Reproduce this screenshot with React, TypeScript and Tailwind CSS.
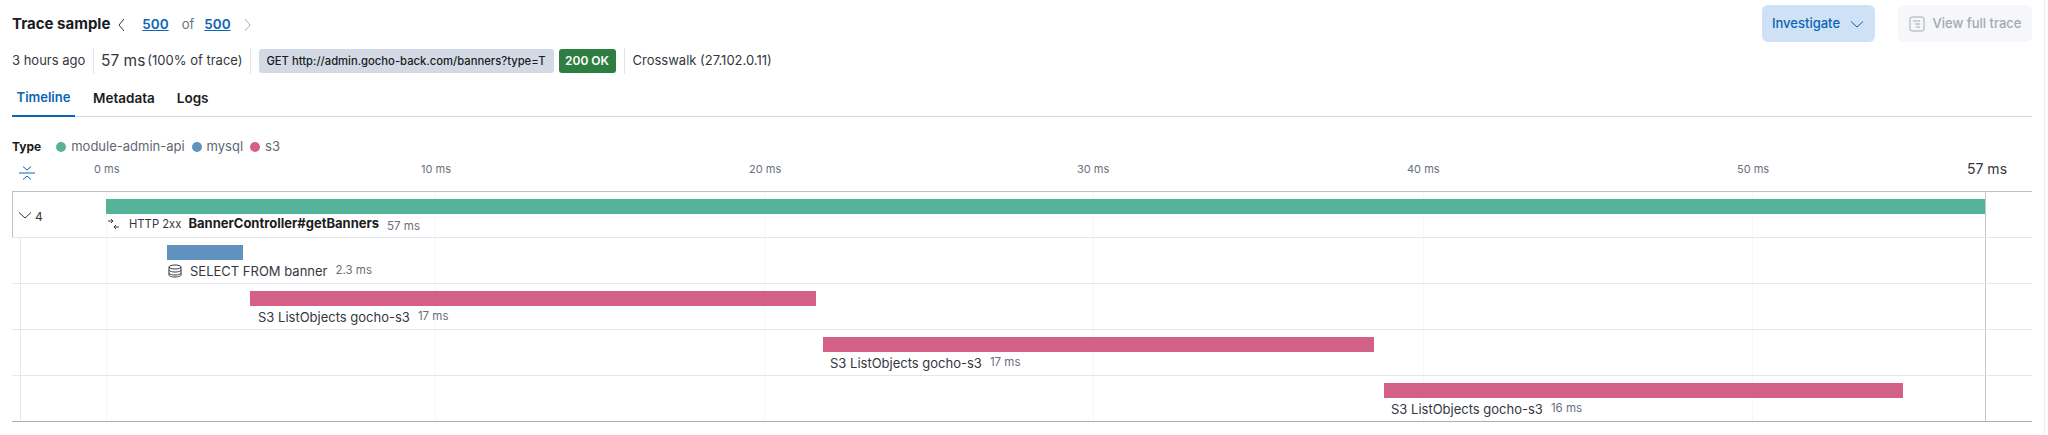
import React from "react";

const Chevron = ({ dir, className }: { dir: "left" | "right" | "down"; className?: string }) => {
  const d = dir === "left" ? "M10 2 L5 8 L10 14" : dir === "right" ? "M6 2 L11 8 L6 14" : "M2 5.5 L8 11 L14 5.5";
  return (
    <svg width="16" height="16" viewBox="0 0 16 16" fill="none" stroke="currentColor" strokeWidth="1" className={className}>
      <path d={d} />
    </svg>
  );
};

const Divider = () => <div className="h-[26px] w-px bg-[#dfe4ec]" />;

const Legend = ({ color, label }: { color: string; label: string }) => (
  <div className="flex items-center gap-[5px]">
    <span className="h-[10px] w-[10px] rounded-full" style={{ backgroundColor: color }} />
    <span className="text-[13px] text-[#5f6773]">{label}</span>
  </div>
);

const ticks = [
  { label: "0 ms", w: "w-[327px]" },
  { label: "10 ms", w: "w-[328px]" },
  { label: "20 ms", w: "w-[328px]" },
  { label: "30 ms", w: "w-[330px]" },
  { label: "40 ms", w: "w-[330px]" },
  { label: "50 ms", w: "w-[230px]" },
];
const grid = ["left-[94px]", "left-[423px]", "left-[752px]", "left-[1081px]", "left-[1411px]", "left-[1740px]"];

const Duration = ({ children }: { children: React.ReactNode }) => (
  <span className="text-[11.5px] text-[#69707d]">{children}</span>
);

const SpanRow = ({
  barClass,
  labelClass,
  label,
  dur,
  icon,
}: {
  barClass: string;
  labelClass: string;
  label: string;
  dur: string;
  icon?: React.ReactNode;
}) => (
  <div className="relative h-[46px] border-t border-[#e3e7ee] pt-[7px]">
    <div className={`h-[15px] ${barClass}`} />
    <div className={`mt-[2px] flex h-[18px] items-center gap-2 ${labelClass}`}>
      {icon}
      <span className="text-[13px] leading-[18px] text-[#343741]">{label}</span>
      <Duration>{dur}</Duration>
    </div>
  </div>
);

export default function App() {
  return (
    <div className="h-[435px] w-[2045px] overflow-hidden border-r border-[#eceff4] bg-white pl-3 pr-3 font-['Inter',sans-serif] text-[#1a1c21]">
      <div className="flex h-[43px] items-center pt-[6px]">
        <span className="text-[15px] font-bold">Trace sample</span>
        <Chevron dir="left" className="ml-[4px] text-[#343741]" />
        <span className="ml-[12px] text-[13.5px] font-semibold text-[#0b64b4] underline">500</span>
        <span className="ml-[13px] text-[13px] text-[#69707d]">of</span>
        <span className="ml-[10px] text-[13.5px] font-semibold text-[#0b64b4] underline">500</span>
        <Chevron dir="right" className="ml-[8px] text-[#a8afbb]" />
        <div className="ml-auto flex -translate-y-[1px] items-center gap-[23px]">
          <div className="flex h-[37px] w-[113px] items-center justify-center gap-[9px] rounded-[6px] bg-[#cfe2f5] text-[13px] font-medium text-[#0b64b4]">
            Investigate
            <Chevron dir="down" className="text-[#0b64b4]" />
          </div>
          <div className="flex h-[37px] w-[134px] items-center justify-center gap-2 rounded-[6px] bg-[#f6f7fa] text-[13px] font-medium text-[#a2a9b5]">
            <svg width="16" height="16" viewBox="0 0 16 16" fill="none" stroke="currentColor" strokeWidth="1">
              <rect x="1" y="1" width="14" height="14" rx="2" />
              <path d="M4 5h7M6 8h5M7 11h4" />
            </svg>
            View full trace
          </div>
        </div>
      </div>

      <div className="flex h-[36px] items-center">
        <span className="w-[81px] text-[13px] text-[#343741]">3 hours ago</span>
        <Divider />
        <span className="ml-[7px] text-[15.5px] text-[#343741]">57 ms</span>
        <span className="ml-[2px] text-[13px] text-[#343741]">(100% of trace)</span>
        <div className="ml-[7px]"><Divider /></div>
        <span className="ml-2 flex h-[24px] w-[295px] items-center justify-center whitespace-nowrap rounded-[3px] bg-[#d3dae6] text-[11.25px] font-medium text-[#1a1c21]">
          GET http://admin.gocho-back.com/banners?type=T
        </span>
        <span className="ml-[5px] mr-2 flex h-[24px] w-[57px] items-center justify-center rounded-[3px] bg-[#2e7d41] text-[12px] font-semibold text-white">
          200 OK
        </span>
        <Divider />
        <span className="ml-2 text-[13px] text-[#343741]">Crosswalk (27.102.0.11)</span>
      </div>

      <div className="mt-[1px] flex h-[37px] items-center border-b border-[#d3dae6]">
        <div className="flex h-[37px] w-[63px] items-center justify-center border-b-2 border-[#0b64b4] pt-[2px] text-[13px] font-semibold text-[#0b64b4]">
          Timeline
        </div>
        <span className="ml-[18px] pt-[1px] text-[13.5px] font-semibold">Metadata</span>
        <span className="ml-[22px] pt-[1px] text-[13.5px] font-semibold">Logs</span>
      </div>

      <div className="mt-[20px] flex h-[20px] items-center gap-[7px]">
        <span className="mr-[8px] text-[12px] font-bold">Type</span>
        <Legend color="#54b399" label="module-admin-api" />
        <Legend color="#6092c0" label="mysql" />
        <Legend color="#d36086" label="s3" />
      </div>

      <div className="flex h-[34px] items-center pb-[10px]">
        <svg width="16" height="18" viewBox="0 0 16 18" fill="none" stroke="#0b64b4" strokeWidth="1" className="ml-[7px] mt-[7px]">
          <path d="M0 9h16M4 2.500 L8 6 L12 2.500M4 15.500 L8 12 L12 15.500" />
        </svg>
        <div className="ml-[59px] flex text-[11px] text-[#69707d]">
          {ticks.map((t) => (
            <span key={t.label} className={t.w}>{t.label}</span>
          ))}
        </div>
        <span className="mb-[2px] text-[14px] text-[#343741]">57 ms</span>
      </div>

      <div className="relative w-[2020px] border-b border-[#a9adb5]">
        {grid.map((g) => (
          <div key={g} className={`absolute bottom-0 top-0 w-px bg-[#f5f6f9] ${g}`} />
        ))}
        <div className="absolute bottom-0 left-[8px] top-[46px] w-px bg-[#e3e7ee]" />
        <div className="absolute bottom-0 left-[1973px] top-0 w-px bg-[#c2c7d1]" />

        <div className="relative h-[46px] border-l border-t border-[#bcc2cd] pt-[7px]">
          <div className="ml-[93px] h-[15px] w-[1879px] bg-[#54b399]" />
          <div className="absolute left-[4px] top-[12px] flex items-center text-[#343741]">
            <Chevron dir="down" />
            <span className="ml-[2px] mt-[4px] text-[12px]">4</span>
          </div>
          <div className="ml-[94px] mt-[1px] flex h-[18px] items-center">
            <svg width="13" height="13" viewBox="0 0 13 13" fill="none" stroke="#343741" strokeWidth="1">
              <path d="M1 3h5M4 1l2 2-2 2M12 9H7M9 7L7 9l2 2" />
            </svg>
            <span className="ml-[9px] text-[11.25px] text-[#343741]">HTTP 2xx</span>
            <span className="ml-[7px] text-[13px] font-bold">BannerController#getBanners</span>
            <span className="ml-2"><Duration>57 ms</Duration></span>
          </div>
        </div>

        <SpanRow
          barClass="ml-[155px] w-[76px] bg-[#6092c0]"
          labelClass="ml-[156px]"
          label="SELECT FROM banner"
          dur="2.3 ms"
          icon={
            <svg width="14" height="14" viewBox="0 0 14 14" fill="none" stroke="#343741" strokeWidth="1">
              <ellipse cx="7" cy="3" rx="6" ry="2" />
              <path d="M1 3v8c0 1.100 2.700 2 6 2s6-.9 6-2V3M1 6c0 1.100 2.700 2 6 2s6-.9 6-2M1 9c0 1.100 2.700 2 6 2s6-.9 6-2" />
            </svg>
          }
        />
        <SpanRow barClass="ml-[238px] w-[566px] bg-[#d36086]" labelClass="ml-[246px]" label="S3 ListObjects gocho-s3" dur="17 ms" />
        <SpanRow barClass="ml-[811px] w-[551px] bg-[#d36086]" labelClass="ml-[818px]" label="S3 ListObjects gocho-s3" dur="17 ms" />
        <SpanRow barClass="ml-[1372px] w-[519px] bg-[#d36086]" labelClass="ml-[1379px]" label="S3 ListObjects gocho-s3" dur="16 ms" />
      </div>
    </div>
  );
}
